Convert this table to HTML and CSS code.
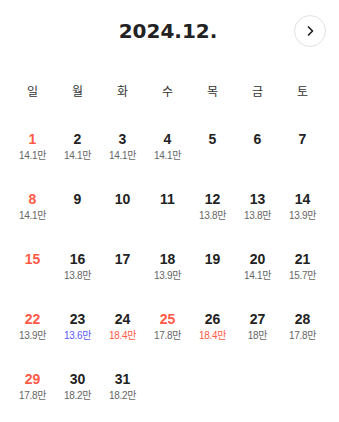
FILE: index.html
```html
<!DOCTYPE html>
<html lang="ko">
<head>
<meta charset="utf-8">
<link rel="stylesheet" href="styles.css">
</head>
<body>
<div class="calendar">
  <div class="header">
    <div></div>
    <h1 class="title">2024.12.</h1>
    <button class="next" aria-label="다음 달">
      <svg width="12" height="12" viewBox="0 0 12 12"><path d="M4.5 2 L8.5 6 L4.5 10" fill="none" stroke="#222" stroke-width="1.7" stroke-linecap="round" stroke-linejoin="round"/></svg>
    </button>
  </div>
  <div class="weekdays">
    <span>일</span><span>월</span><span>화</span><span>수</span><span>목</span><span>금</span><span>토</span>
  </div>
  <div class="days">
    <div class="day"><span class="num red">1</span><span class="price">14.1만</span></div>
    <div class="day"><span class="num">2</span><span class="price">14.1만</span></div>
    <div class="day"><span class="num">3</span><span class="price">14.1만</span></div>
    <div class="day"><span class="num">4</span><span class="price">14.1만</span></div>
    <div class="day"><span class="num">5</span></div>
    <div class="day"><span class="num">6</span></div>
    <div class="day"><span class="num">7</span></div>

    <div class="day"><span class="num red">8</span><span class="price">14.1만</span></div>
    <div class="day"><span class="num">9</span></div>
    <div class="day"><span class="num">10</span></div>
    <div class="day"><span class="num">11</span></div>
    <div class="day"><span class="num">12</span><span class="price">13.8만</span></div>
    <div class="day"><span class="num">13</span><span class="price">13.8만</span></div>
    <div class="day"><span class="num">14</span><span class="price">13.9만</span></div>

    <div class="day"><span class="num red">15</span></div>
    <div class="day"><span class="num">16</span><span class="price">13.8만</span></div>
    <div class="day"><span class="num">17</span></div>
    <div class="day"><span class="num">18</span><span class="price">13.9만</span></div>
    <div class="day"><span class="num">19</span></div>
    <div class="day"><span class="num">20</span><span class="price">14.1만</span></div>
    <div class="day"><span class="num">21</span><span class="price">15.7만</span></div>

    <div class="day"><span class="num red">22</span><span class="price">13.9만</span></div>
    <div class="day"><span class="num">23</span><span class="price low">13.6만</span></div>
    <div class="day"><span class="num">24</span><span class="price high">18.4만</span></div>
    <div class="day"><span class="num red">25</span><span class="price">17.8만</span></div>
    <div class="day"><span class="num">26</span><span class="price high">18.4만</span></div>
    <div class="day"><span class="num">27</span><span class="price">18만</span></div>
    <div class="day"><span class="num">28</span><span class="price">17.8만</span></div>

    <div class="day"><span class="num red">29</span><span class="price">17.8만</span></div>
    <div class="day"><span class="num">30</span><span class="price">18.2만</span></div>
    <div class="day"><span class="num">31</span><span class="price">18.2만</span></div>
  </div>
</div>
</body>
</html>
```
FILE: styles.css
```css
* { box-sizing: border-box; }
html, body { margin: 0; padding: 0; background: #fff; }
body {
  font-family: "Liberation Sans", "Noto Sans CJK KR", sans-serif;
  color: #222;
}
.calendar {
  width: 339px;
  padding: 0 13px 0 10px;
}
.header {
  height: 62px;
  display: grid;
  grid-template-columns: 1fr auto 1fr;
  align-items: center;
}
.title {
  margin: 0;
  font-family: "DejaVu Sans", sans-serif;
  font-weight: bold;
  font-size: 20px;
  color: #222;
}
.next {
  justify-self: end;
  width: 32px;
  height: 32px;
  border-radius: 50%;
  border: 1px solid #dfe2e6;
  background: #fff;
  padding: 0;
  display: flex;
  align-items: center;
  justify-content: center;
}
.weekdays {
  width: 315px;
  height: 56px;
  display: grid;
  grid-template-columns: repeat(7, 1fr);
  align-items: center;
  justify-items: center;
  font-family: "Noto Sans CJK KR", sans-serif;
  font-size: 12px;
  color: #333;
  margin-bottom: 2px;
}
.days {
  width: 315px;
  display: grid;
  grid-template-columns: repeat(7, 1fr);
  grid-auto-rows: 60px;
}
.day {
  display: flex;
  flex-direction: column;
  align-items: center;
  padding-top: 10px;
}
.num {
  font-weight: bold;
  font-size: 14px;
  line-height: 18px;
  color: #222;
}
.num.red { color: #ff5a45; }
.price {
  margin-top: 1px;
  font-size: 10px;
  line-height: 14px;
  color: #666;
  letter-spacing: -0.3px;
}
.price.low { color: #5a5aff; }
.price.high { color: #ff5a45; }
```
